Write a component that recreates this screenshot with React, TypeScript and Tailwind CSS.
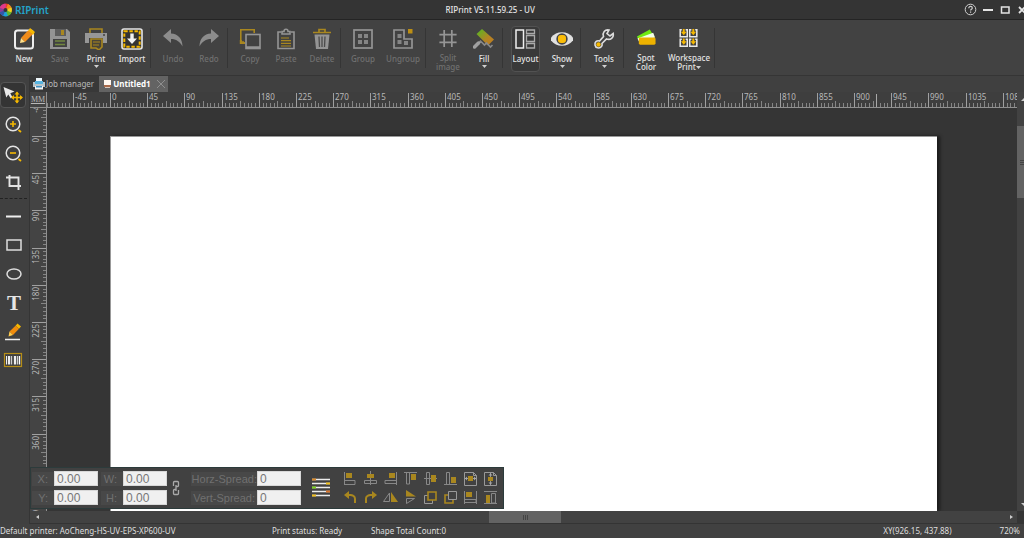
import { ReactNode } from 'react';
import clsx from 'clsx';

const GOLD = '#a9871f';
const AMBER = '#f5b800';

interface IIcon {
  size: number;
  children: ReactNode;
}

const Icon = ({ size, children }: IIcon) => (
  <svg width={size} height={size} viewBox={`0 0 ${size} ${size}`} fill="none" aria-hidden="true">
    {children}
  </svg>
);

interface ITool {
  label: string;
  icon: ReactNode;
  width?: string;
  disabled?: boolean;
  menu?: boolean;
  inlineMenu?: boolean;
  active?: boolean;
}

const workspaceCell = (x: number, y: number) => (
  <g key={`${x}-${y}`}>
    <path d={`M${x + 2.500} ${y + 0.8}h-1.700v7.400h7.400v-7.400h-1.700`} stroke="#e8e8e8" strokeWidth="1.600" />
    <path d={`M${x + 4.5} ${y}v4`} stroke={AMBER} strokeWidth="2" />
    <path d={`M${x + 1.5} ${y + 3}h6l-3 3.500z`} fill={AMBER} />
  </g>
);

const toolGroups: ITool[][] = [
  [
    {
      label: 'New',
      icon: (
        <>
          <rect x="2" y="2.5" width="18" height="18" rx="2.5" stroke="#eee" strokeWidth="2" />
          <path d="M17 0l5 4-2 3-5-4z" fill={AMBER} />
          <path d="M15 2.5l4.5 4L12 14l-4-4z" fill="#f08c1a" />
          <path d="M8 10l4 4-5 1z" fill="#ffe08a" />
        </>
      ),
    },
    {
      label: 'Save',
      disabled: true,
      icon: (
        <>
          <path d="M1 1h17l3 3v17H1z" fill="#949494" />
          <path d="M6 1h11v7H6z" fill="#5d5d5d" />
          <path d="M12 2h3v5h-3z" fill={GOLD} />
          <path d="M4 11h14v8H4z" fill="#414141" />
          <path d="M6 13h10M6 16.5h10" stroke="#71873f" strokeWidth="1.4" />
        </>
      ),
    },
    {
      label: 'Print',
      menu: true,
      icon: (
        <>
          <path d="M5 5V1h12v4" stroke={GOLD} strokeWidth="1.6" />
          <path d="M0 5h22v10h-4v-4H4v4H0z" fill="#979797" />
          <path d="M18 7h2" stroke="#414141" strokeWidth="1.3" />
          <path d="M4 10.5h14" stroke="#414141" strokeWidth="1" />
          <path d="M6 11h11v8l-3 3-3-2H6z" fill="#4b4536" stroke={GOLD} strokeWidth="1.6" />
          <path d="M8 14h7M8 17h6" stroke={GOLD} strokeWidth="1.2" />
        </>
      ),
    },
    {
      label: 'Import',
      icon: (
        <>
          <rect x="1" y="1" width="20" height="20" rx="2" fill="#333" stroke="#e6e6e6" strokeWidth="1.6" />
          <rect x="3.3" y="3.3" width="15.4" height="15.4" stroke={AMBER} strokeWidth="2" strokeDasharray="3.4 1.7" />
          <path d="M9.3 5.5h3.4v5H16l-5 5.5-5-5.5h3.3z" fill="#f2f2f2" />
        </>
      ),
    },
  ],
  [
    {
      label: 'Undo',
      disabled: true,
      icon: <path d="M1 8l8-7v4.500c7 .5 11.500 5 11.500 13C18 13.500 14 11 9 11v4z" fill="#8c8c8c" />,
    },
    {
      label: 'Redo',
      disabled: true,
      icon: <path d="M21 8l-8-7v4.500C6 6 1.500 10.500 1.500 18.500 4 13.500 8 11 13 11v4z" fill="#8c8c8c" />,
    },
  ],
  [
    {
      label: 'Copy',
      disabled: true,
      icon: (
        <>
          <path d="M5 14H1.800V1.800h13.400V5" stroke={GOLD} strokeWidth="1.6" />
          <path d="M1.800 12v3H6" stroke={GOLD} strokeWidth="2" />
          <rect x="7" y="6.500" width="14" height="14" stroke="#959595" strokeWidth="1.6" />
          <path d="M7 19.500h14" stroke="#959595" strokeWidth="2.500" />
        </>
      ),
    },
    {
      label: 'Paste',
      disabled: true,
      icon: (
        <>
          <path d="M6 4H3v16.500h16V4h-3" stroke="#959595" strokeWidth="1.6" />
          <path d="M7 6V3.500h2C9 .5 13 .5 13 3.500h2V6z" stroke="#959595" strokeWidth="1.600" />
          <path d="M6 10h8M6 12.700h10M6 15.300h10M6 18h10" stroke={GOLD} strokeWidth="1.2" />
        </>
      ),
    },
    {
      label: 'Delete',
      disabled: true,
      icon: (
        <>
          <path d="M2 4.500h18M8 4V1.500h6V4" stroke={GOLD} strokeWidth="1.700" />
          <path d="M3.500 6.500h15L17 21H5z" fill="#949494" />
          <path d="M8 8.500l.5 10.500M11 8.500V19M14 8.500L13.500 19" stroke="#4b4b4b" strokeWidth="1.300" />
        </>
      ),
    },
  ],
  [
    {
      label: 'Group',
      disabled: true,
      icon: (
        <>
          <rect x="2" y="2" width="18" height="18" stroke="#959595" strokeWidth="1.700" />
          <path d="M6 6h4v4H6zM12 6h4v4h-4zM6 12h4v4H6zM12 12h4v4h-4z" fill="#858585" />
        </>
      ),
    },
    {
      label: 'Ungroup',
      disabled: true,
      width: 'w-11',
      icon: (
        <>
          <path d="M12 2H2v18h18v-9h-8z" stroke="#959595" strokeWidth="1.700" />
          <path d="M5.500 6h4v4h-4zM5.500 12h4v4h-4zM12 13h4v4h-4z" fill="#858585" />
          <path d="M16 1h4.500v4.500H16z" fill="#bd8f14" />
        </>
      ),
    },
  ],
  [
    {
      label: 'Split image',
      disabled: true,
      icon: <path d="M7 2v18M15 2v18M2 7h18M2 15h18" stroke="#959595" strokeWidth="1.800" />,
    },
    {
      label: 'Fill',
      menu: true,
      icon: (
        <>
          <defs>
            <linearGradient id="fillRoller" x1="0" y1="0" x2="1" y2="1">
              <stop offset="0.150" stopColor="#69ad22" />
              <stop offset="0.600" stopColor="#b58424" />
              <stop offset="1" stopColor="#c07a1c" />
            </linearGradient>
          </defs>
          <path d="M9 1l12 10.500-6 6L3.500 6z" fill="url(#fillRoller)" />
          <path d="M2 18l5.500-5 4 4 2-2 4 4 2-2" stroke="#898989" strokeWidth="1.600" />
          <path d="M1.500 19l4-4" stroke="#a0a0a0" strokeWidth="3.500" strokeLinecap="round" />
        </>
      ),
    },
  ],
  [
    {
      label: 'Layout',
      active: true,
      width: 'w-[37px]',
      icon: (
        <>
          <rect x="2" y="2" width="7.500" height="18" stroke="#eee" strokeWidth="1.500" />
          <path d="M12.500 2h8v3.500h-8zM12.500 7.500h8v6h-8zM12.500 15.500h8V20h-8z" stroke="#aaa" strokeWidth="1.300" />
        </>
      ),
    },
    {
      label: 'Show',
      menu: true,
      icon: (
        <>
          <path d="M-1 11C4 2 18 2 23 11 18 20 4 20-1 11z" fill="#e0e0e0" />
          <circle cx="11" cy="11" r="5.700" fill="#454545" />
          <rect x="7" y="7" width="8" height="8" rx="3" fill="#fbbd08" />
        </>
      ),
    },
  ],
  [
    {
      label: 'Tools',
      menu: true,
      width: 'w-[38px]',
      icon: (
        <>
          <path
            d="M16 2c-4-1-7 3-5.500 6.500L6.500 13C3.500 12 1.500 14.500 2 17c.5 3 4.500 4 6.500 1.500.8-1 .8-2 .5-3L13.500 11c4 1.500 7.500-1.500 6.700-5.500L17 8l-3-2.500z"
            stroke="#dcdcdc"
            strokeWidth="1.600"
          />
          <circle cx="5.500" cy="16.500" r="2.200" fill={AMBER} />
        </>
      ),
    },
  ],
  [
    {
      label: 'Spot Color',
      icon: (
        <>
          <path d="M1.500 9L15 1.500l3 5L4 14z" fill="#6fea12" />
          <path d="M2 11l16.500-6 2 5L4 15z" fill="#f3ffe9" />
          <rect x="3.500" y="10" width="17.500" height="7.500" rx="1.500" fill="#edb100" />
        </>
      ),
    },
    {
      label: 'Workspace Print',
      inlineMenu: true,
      width: 'w-[50px]',
      icon: <>{[workspaceCell(1, 1), workspaceCell(11, 1), workspaceCell(1, 11), workspaceCell(11, 11)]}</>,
    },
  ],
];

const Caret = () => (
  <svg width="5" height="3" viewBox="0 0 5 3" className="inline-block" aria-hidden="true">
    <path d="M0 0h5L2.500 3z" fill="#d0d0d0" />
  </svg>
);

const ToolButton = ({ label, icon, width, disabled, menu, inlineMenu, active }: ITool) => (
  <button
    type="button"
    disabled={disabled}
    className={clsx(
      'flex h-[46px] shrink-0 flex-col items-center text-center text-[8px] leading-[9px] font-medium',
      width ?? 'w-9',
      disabled ? 'text-[#707070]' : 'text-[#e4e4e4]'
    )}
  >
    <span
      className={clsx(
        'flex h-[46px] flex-col items-center border pt-px',
        active ? 'rounded-sm border-[#525252] bg-[#393939]' : 'border-transparent'
      )}
    >
      <Icon size={22}>{icon}</Icon>
      <span className="mt-1">
        {label}
        {inlineMenu && <Caret />}
      </span>
      {menu && (
        <span className="mt-[2px] flex">
          <Caret />
        </span>
      )}
    </span>
  </button>
);

interface ISideTool {
  name: string;
  icon: ReactNode;
  active?: boolean;
}

const magnifier = (
  <>
    <circle cx="12" cy="12" r="6.800" stroke="#e4e4e4" strokeWidth="1.500" />
    <path d="M17.500 18l2.500 2" stroke={AMBER} strokeWidth="1.800" />
  </>
);

const selectTools: ISideTool[] = [
  {
    name: 'Select and move',
    active: true,
    icon: (
      <>
        <path d="M2.500 4l11 4.500-4.200 1.800 2.200 4.200-1.700 1-2.500-4-2 3z" fill="#e8e8e8" />
        <path d="M16 9.500v10M11 14.500h10" stroke={AMBER} strokeWidth="1.600" />
        <path d="M16 8.500l2.500 3h-5zM16 20.500l2.500-3h-5zM10 14.500l3-2.500v5zM22 14.500l-3-2.500v5z" fill={AMBER} />
      </>
    ),
  },
  {
    name: 'Zoom in',
    icon: (
      <>
        {magnifier}
        <path d="M12 9v6M9 12h6" stroke={AMBER} strokeWidth="1.600" />
      </>
    ),
  },
  {
    name: 'Zoom out',
    icon: (
      <>
        {magnifier}
        <path d="M9 12h6" stroke={AMBER} strokeWidth="1.600" />
      </>
    ),
  },
  {
    name: 'Crop',
    icon: <path d="M5 7.500h12.500V20M8.500 5v11H20" stroke="#e4e4e4" strokeWidth="1.900" />,
  },
];

const shapeTools: ISideTool[] = [
  { name: 'Line', icon: <path d="M5 12.500h15" stroke="#eee" strokeWidth="2" /> },
  { name: 'Rectangle', icon: <rect x="6" y="7" width="14" height="10" stroke="#ddd" strokeWidth="1.500" /> },
  { name: 'Ellipse', icon: <ellipse cx="13" cy="12" rx="7" ry="5" stroke="#ddd" strokeWidth="1.500" /> },
  {
    name: 'Text',
    icon: (
      <text x="13" y="19" textAnchor="middle" fill="#e6e6e6" fontSize="21" fontWeight="700" fontFamily="'Liberation Serif', serif">
        T
      </text>
    ),
  },
  {
    name: 'Pencil',
    icon: (
      <>
        <path d="M4 19.500h15" stroke="#eee" strokeWidth="1.500" />
        <path d="M16.500 3.500l3.500 3-2 2.200-3.500-3z" fill={AMBER} />
        <path d="M14.500 5.700l3.500 3-6 6.300-3.500-3.500z" fill="#f08c0c" />
        <path d="M8.500 11.500l3.500 3.500-4.500 1.500z" fill="#ffcc4d" />
      </>
    ),
  },
  {
    name: 'Barcode',
    icon: (
      <>
        <rect x="3.500" y="4.500" width="17" height="13" stroke="#b58d17" strokeWidth="1.200" />
        <path d="M5.500 7v8.500" stroke="#eee" strokeWidth="1" />
        <path d="M8 7v8.500M14 7v8.500" stroke="#eee" strokeWidth="2.200" />
        <path d="M10.500 7v8.500M16.500 7v8.500" stroke="#ccc" strokeWidth="1.300" />
        <path d="M18.500 7v8.500" stroke="#fff" strokeWidth="1.300" />
      </>
    ),
  },
];

const SideButton = ({ name, icon, active }: ISideTool) => (
  <button type="button" aria-label={name} className="flex h-[29px] w-[26px] items-center">
    <span
      className={clsx(
        'flex h-[26px] w-[26px] items-center rounded-sm border',
        active ? 'border-[#555] bg-[#343434]' : 'border-transparent'
      )}
    >
      <Icon size={24}>{icon}</Icon>
    </span>
  </button>
);

// 45 mm take 372 tenths of a pixel at the current zoom
const STEP = 37.2;
const range = (from: number, to: number) => Array.from({ length: to - from }, (_, i) => from + i);

const HorizontalRuler = () => (
  <svg width="100%" height="16" className="block bg-[#3e3e3e]" aria-hidden="true">
    {range(-17, 260).map((n) => {
      const x = Math.round(63 + (n * STEP) / 10) + 0.5;
      const top = n % 10 === 0 ? 1 : n % 5 === 0 ? 9 : 11;
      return <path key={n} d={`M${x} ${top}V15`} stroke={n % 10 === 0 ? '#a0a0a0' : '#858585'} />;
    })}
    {range(-1, 26).map((n) => (
      <text key={n} x={Math.round(65 + n * STEP)} y="8" fontSize="8" fill="#b8b8b8">
        {n * 45}
      </text>
    ))}
    <path d="M829.500 2v13" stroke="#a8a8a8" />
    <path d="M0 15.500h2000" stroke="#909090" />
  </svg>
);

const VerticalRuler = () => (
  <svg width="17" height="100%" className="block bg-[#444]" aria-hidden="true">
    {range(-7, 120).map((n) => {
      const y = Math.round(28 + (n * STEP) / 10) + 0.5;
      const left = n % 10 === 0 ? 2 : n % 5 === 0 ? 11 : 13;
      return <path key={n} d={`M${left} ${y}H16`} stroke={n % 10 === 0 ? '#a0a0a0' : '#858585'} />;
    })}
    {range(-1, 12).map((n) => (
      <text
        key={n}
        transform={`translate(9 ${Math.round(30 + n * STEP)}) rotate(-90)`}
        textAnchor="end"
        fontSize="8"
        fill="#b8b8b8"
      >
        {n * 45}
      </text>
    ))}
    <path d="M16.500 0v2000" stroke="#909090" />
  </svg>
);

interface IField {
  id: string;
  label: string;
  value: string;
  labelWidth: string;
}

const Field = ({ id, label, value, labelWidth }: IField) => (
  <div className="flex h-[15px] items-center">
    <label
      htmlFor={id}
      className={clsx('h-[14px] bg-[#484848] text-right leading-[14px] whitespace-nowrap text-[#707070]', labelWidth)}
    >
      {label}
    </label>
    <input
      id={id}
      defaultValue={value}
      className="h-[15px] w-11 border border-[#d8d8d8] bg-[#f0f0f0] px-[2px] text-[12px] leading-[13px] text-[#777]"
    />
  </div>
);

const alignTools: ISideTool[] = [
  {
    name: 'Align left',
    icon: (
      <>
        <path d="M1.500 1v13M2 9.500h10v4H2" stroke="#888" />
        <path d="M3 2h6v5H3z" fill={GOLD} />
      </>
    ),
  },
  {
    name: 'Align center',
    icon: (
      <>
        <path d="M7.500 0v14M1.500 9.500h12v3h-12z" stroke="#888" />
        <path d="M4 3h7v4H4z" fill={GOLD} />
      </>
    ),
  },
  {
    name: 'Align right',
    icon: (
      <>
        <path d="M13.500 1v13M13 9.500H2v3h11" stroke="#888" />
        <path d="M6 2h6v5H6z" fill={GOLD} />
      </>
    ),
  },
  {
    name: 'Align top',
    icon: (
      <>
        <path d="M1 1.500h13M3.500 2v11h3V2" stroke="#888" />
        <path d="M8 3h5v6H8z" fill={GOLD} />
      </>
    ),
  },
  {
    name: 'Align middle',
    icon: (
      <>
        <path d="M1 7.500h13M3.500 1.500h3v12h-3z" stroke="#888" />
        <path d="M8 4h5v7H8z" fill={GOLD} />
      </>
    ),
  },
  {
    name: 'Align bottom',
    icon: (
      <>
        <path d="M1 13.500h13M3.500 13V1.500h3V13" stroke="#888" />
        <path d="M8 6h5v6H8z" fill={GOLD} />
      </>
    ),
  },
  {
    name: 'Center on page horizontally',
    icon: (
      <>
        <path d="M1.500 1.500h9l3 3v10h-12zM10.500 1.500v3h3M2 7.500h11" stroke="#999" />
        <path d="M5 5h5v5H5z" fill={GOLD} />
        <path d="M4 5.500v4l-2-2zM11 5.500v4l2-2z" fill="#aaa" />
      </>
    ),
  },
  {
    name: 'Center on page vertically',
    icon: (
      <>
        <path d="M1.500 1.500h9l3 3v10h-12zM10.500 1.500v3h3M7.500 2v12" stroke="#999" />
        <path d="M5 6h5v4H5z" fill={GOLD} />
        <path d="M5.500 4.500h4l-2-2zM5.500 11.500h4l-2 2z" fill="#aaa" />
      </>
    ),
  },
];

const arrangeTools: ISideTool[] = [
  { name: 'Rotate left', icon: <path d="M1 5l5-4v3c5 0 7 2 7 5v4h-2V9c0-2-1-3-5-3v3z" fill={GOLD} /> },
  { name: 'Rotate right', icon: <path d="M14 5L9 1v3C4 4 2 6 2 9v4h2V9c0-2 1-3 5-3v3z" fill={GOLD} /> },
  {
    name: 'Mirror horizontally',
    icon: (
      <>
        <path d="M6.500 3v8.500h-6z" stroke="#888" />
        <path d="M8 2l7 10H8z" fill={GOLD} />
      </>
    ),
  },
  {
    name: 'Mirror vertically',
    icon: (
      <>
        <path d="M3 0l10 6.500H3z" fill={GOLD} />
        <path d="M3.500 8.500h8l-8 5z" stroke="#888" />
      </>
    ),
  },
  {
    name: 'Bring to front',
    icon: (
      <>
        <path d="M5 5.500H1.500v8h8V10" stroke="#999" />
        <path d="M5 2h8v8H5z" stroke={GOLD} strokeWidth="1.600" />
      </>
    ),
  },
  {
    name: 'Send to back',
    icon: (
      <>
        <path d="M5 5H2v8h8v-3" stroke={GOLD} strokeWidth="1.600" />
        <path d="M5.500 1.500h8v8h-8z" stroke="#999" />
      </>
    ),
  },
  {
    name: 'Same width',
    icon: (
      <>
        <path d="M1.500 1v13M13.500 1v13M2 9.500h11v3H2" stroke="#888" />
        <path d="M3 2h6v5H3z" fill={GOLD} />
      </>
    ),
  },
  {
    name: 'Same height',
    icon: (
      <>
        <path d="M1 1.500h13M1 13.500h13M8.500 3.500h4V13h-4z" stroke="#888" />
        <path d="M3 5h4v8H3z" fill={GOLD} />
      </>
    ),
  },
];

const listRows = [
  { y: 1, tip: '#d98a2b', end: false },
  { y: 5, tip: '#f0c020', end: true },
  { y: 9, tip: '#7ed321', end: false },
  { y: 13, tip: '#d9742b', end: true },
  { y: 17, tip: '#f0c020', end: false },
];

const ShapePanel = () => (
  <form className="absolute bottom-[15px] left-0 flex items-center border border-[#2c3b3b] bg-[#414141] py-[3px] pr-[5px] pl-px font-['Liberation_Sans',sans-serif] text-[11px]">
    <div className="flex flex-col gap-1">
      <Field id="pos-x" label="X:" value="0.00" labelWidth="w-[22px] pr-[6px]" />
      <Field id="pos-y" label="Y:" value="0.00" labelWidth="w-[22px] pr-[6px]" />
    </div>
    <div className="ml-[3px] flex flex-col gap-1">
      <Field id="size-w" label="W:" value="0.00" labelWidth="w-[22px] pr-[6px]" />
      <Field id="size-h" label="H:" value="0.00" labelWidth="w-[22px] pr-[6px]" />
    </div>
    <button type="button" aria-label="Lock proportions" className="ml-[5px]">
      <svg width="8" height="16" viewBox="0 0 8 16" fill="none" stroke="#aaa" strokeWidth="1.300">
        <path d="M1.500 6V2.500q0-1 1-1h3q1 0 1 1v3q0 1-1 1H4M6.500 10v3.500q0 1-1 1h-3q-1 0-1-1v-3q0-1 1-1H4M4 5v6" />
      </svg>
    </button>
    <div className="ml-[11px] flex flex-col gap-1">
      <Field id="spread-h" label="Horz-Spread:" value="0" labelWidth="w-[66px]" />
      <Field id="spread-v" label="Vert-Spread:" value="0" labelWidth="w-[66px] pr-[2px]" />
    </div>
    <button type="button" aria-label="Shape list" className="ml-[10px]">
      <Icon size={20}>
        {listRows.map(({ y, tip, end }) => (
          <g key={y}>
            <path d={`M1 ${y + 0.5}h18`} stroke="#ececec" strokeWidth="1.500" />
            <path d={`M${end ? 15 : 1} ${y + 0.5}h4`} stroke={tip} strokeWidth="2" />
          </g>
        ))}
      </Icon>
    </button>
    <div className="ml-3 grid grid-cols-8 gap-x-[5px] gap-y-1">
      {[...alignTools, ...arrangeTools].map(({ name, icon }) => (
        <button key={name} type="button" aria-label={name}>
          <Icon size={15}>{icon}</Icon>
        </button>
      ))}
    </div>
  </form>
);

const petals = ['#e8392e', '#f08a1c', '#f5d21e', '#5cb531', '#1fa0d8', '#3557a8', '#8b3f98', '#e0388a'];

const TitleBar = () => (
  <header className="flex h-5 items-center border-b border-[#242424] bg-[#343434]">
    <div className="flex w-[43.5%] shrink-0 items-center gap-[2px] text-[10px] leading-[14px] font-semibold text-[#24a4ca]">
      <svg width="13" height="14" viewBox="0 0 13 14" aria-hidden="true">
        {petals.map((color, i) => (
          <path key={color} d="M5.500 7L3 1Q8 -.5 10 3z" fill={color} transform={`rotate(${i * 45} 5.500 7)`} />
        ))}
        <circle cx="5.500" cy="7" r="2" fill="#343434" />
      </svg>
      RIPrint
    </div>
    <h1 className="text-[8px] leading-[10px] font-medium whitespace-nowrap text-[#e4e4e4]">RIPrint V5.11.59.25 - UV</h1>
    <div className="flex flex-1 items-center justify-end gap-[5px] overflow-hidden">
      <button type="button" aria-label="Help">
        <svg width="13" height="13" viewBox="0 0 13 13" fill="none" stroke="#d0d0d0">
          <circle cx="6.500" cy="6.500" r="5.300" />
          <path d="M4.800 5.200c0-2.500 3.500-2.300 3.500-.2 0 1.300-1.700 1.300-1.700 2.500M6.600 8.500v1.200" strokeWidth="1.200" />
        </svg>
      </button>
      <button type="button" aria-label="Minimize">
        <svg width="12" height="12" viewBox="0 0 12 12">
          <path d="M1 6h10" stroke="#e4e4e4" strokeWidth="2" />
        </svg>
      </button>
      <button type="button" aria-label="Maximize">
        <svg width="12" height="12" viewBox="0 0 12 12" fill="none">
          <rect x="2.500" y="3" width="7.500" height="6" stroke="#e4e4e4" strokeWidth="1.500" />
        </svg>
      </button>
      <button type="button" aria-label="Close" className="-mr-1">
        <svg width="12" height="12" viewBox="0 0 12 12">
          <path d="M3 3l6 6M9 3L3 9" stroke="#e4e4e4" strokeWidth="1.800" />
        </svg>
      </button>
    </div>
  </header>
);

const Toolbar = () => (
  <nav className="flex h-14 items-start border-b border-[#353535] bg-[#424242] pt-[6px] pl-[6px]">
    {toolGroups.map((group) => (
      <div key={group[0].label} className="flex shrink-0">
        {group.map((tool) => (
          <ToolButton key={tool.label} {...tool} />
        ))}
        <span className="mt-[2px] mr-1 h-10 w-px bg-[#353535]" />
      </div>
    ))}
  </nav>
);

const Tabs = () => (
  <div className="flex h-4 items-stretch bg-[#404040] text-[8px]">
    <button type="button" className="flex items-center gap-px bg-[#383838] pr-[5px] pl-[3px] text-[#b8b8b8]">
      <svg width="12" height="12" viewBox="0 0 12 12" aria-hidden="true">
        <path d="M3 0h6v4H3z" fill="#eef7fb" />
        <path d="M0 4h12v5H0z" fill="#b9c4ca" />
        <path d="M2 3h8v3H2z" fill="#58b4df" />
        <path d="M2 8h8v3.500H2z" fill="#f4f4f4" />
        <path d="M3 8h6v1.500H3z" fill="#3e8fc0" />
      </svg>
      Job manager
    </button>
    <div className="flex items-center bg-[#636363] pr-[2px] pl-1">
      <button type="button" className="flex items-center gap-px font-bold text-white">
        <svg width="9" height="10" viewBox="0 0 9 10" aria-hidden="true">
          <path d="M1 1h7v5H1z" fill="#fff7f0" />
          <path d="M1 6h7v2H1z" fill="#a8694a" />
          <path d="M2 8h5v1H2z" fill="#d8c8bc" />
        </svg>
        Untitled1
      </button>
      <button type="button" aria-label="Close Untitled1" className="ml-[5px]">
        <svg width="10" height="10" viewBox="0 0 10 10">
          <path d="M1 1l8 8M9 1L1 9" stroke="#8f8f8f" />
        </svg>
      </button>
    </div>
  </div>
);

const StatusBar = () => (
  <footer className="flex h-[14px] items-center bg-[#414141] pr-1 text-[8px] leading-[10px] whitespace-nowrap text-[#dedede]">
    <span className="w-[272px]">Default printer: AoCheng-HS-UV-EPS-XP600-UV</span>
    <span className="w-[99px]">Print status: Ready</span>
    <span className="flex-1">Shape Total Count:0</span>
    <span className="mr-12">XY(926.15, 437.88)</span>
    <span>720%</span>
  </footer>
);

export default function App() {
  return (
    <div className="flex h-screen flex-col overflow-hidden bg-[#414141] font-['Noto_Sans',sans-serif]">
      <TitleBar />
      <Toolbar />
      <div className="flex min-h-0 flex-1">
        <aside className="flex w-[29px] shrink-0 flex-col bg-[#404040] pt-1">
          {selectTools.map((tool) => (
            <SideButton key={tool.name} {...tool} />
          ))}
          <hr className="my-[2px] w-[27px] border-dashed border-[#222]" />
          {shapeTools.map((tool) => (
            <SideButton key={tool.name} {...tool} />
          ))}
        </aside>
        <main className="relative flex min-w-0 flex-1 flex-col border-l border-[#353535]">
          <Tabs />
          <div className="flex min-h-0 flex-1">
            <div className="flex min-w-0 flex-1 flex-col">
              <div className="flex shrink-0">
                <div className="flex h-4 w-[17px] shrink-0 items-center justify-center border-r border-b border-[#909090] bg-[#444] font-['Liberation_Serif',serif] text-[8px] leading-[10px] text-[#b8b8b8] underline">
                  MM
                </div>
                <div className="min-w-0 flex-1">
                  <HorizontalRuler />
                </div>
              </div>
              <div className="flex min-h-0 flex-1">
                <div className="w-[17px] shrink-0 overflow-hidden">
                  <VerticalRuler />
                </div>
                <div className="flex min-w-0 flex-1 bg-[#353535] pt-7 pr-20 pl-[63px]">
                  <div className="flex-1 border-t border-l border-[#999] bg-white shadow-[3px_0_3px_#1c1c1c]" />
                </div>
              </div>
              <div className="flex h-[13px] shrink-0 items-stretch border-b border-[#343434] bg-[#424242]">
                <button type="button" aria-label="Scroll left" className="flex w-[15px] items-center justify-center">
                  <svg width="3" height="4" viewBox="0 0 3 4">
                    <path d="M3 0v4L0 2z" fill="#ccc" />
                  </svg>
                </button>
                <div className="flex flex-1 pl-[45%]">
                  <div className="flex w-[72px] items-center justify-center gap-px bg-[#636363]">
                    <span className="h-[5px] w-px bg-[#444]" />
                    <span className="h-[5px] w-px bg-[#444]" />
                    <span className="h-[5px] w-px bg-[#444]" />
                  </div>
                </div>
                <button type="button" aria-label="Scroll right" className="flex w-[12px] items-center justify-center">
                  <svg width="3" height="4" viewBox="0 0 3 4">
                    <path d="M0 0v4l3-2z" fill="#ccc" />
                  </svg>
                </button>
              </div>
            </div>
            <div className="flex w-[7px] shrink-0 flex-col items-end overflow-hidden bg-[#424242]">
              <button type="button" aria-label="Scroll up" className="flex h-[15px] items-center">
                <svg width="3" height="3" viewBox="0 0 3 3">
                  <path d="M0 3h3V0z" fill="#ccc" />
                </svg>
              </button>
              <div className="flex w-full flex-1 flex-col pt-[19px]">
                <div className="flex h-[72px] flex-col items-end justify-center gap-px bg-[#636363]">
                  <span className="h-px w-1 bg-[#444]" />
                  <span className="h-px w-1 bg-[#444]" />
                  <span className="h-px w-1 bg-[#444]" />
                </div>
              </div>
              <button type="button" aria-label="Scroll down" className="flex h-[14px] items-center">
                <svg width="3" height="3" viewBox="0 0 3 3">
                  <path d="M0 0h3v3z" fill="#ccc" />
                </svg>
              </button>
              <span className="h-[13px] w-full bg-[#353535]" />
            </div>
          </div>
          <ShapePanel />
        </main>
      </div>
      <StatusBar />
    </div>
  );
}
